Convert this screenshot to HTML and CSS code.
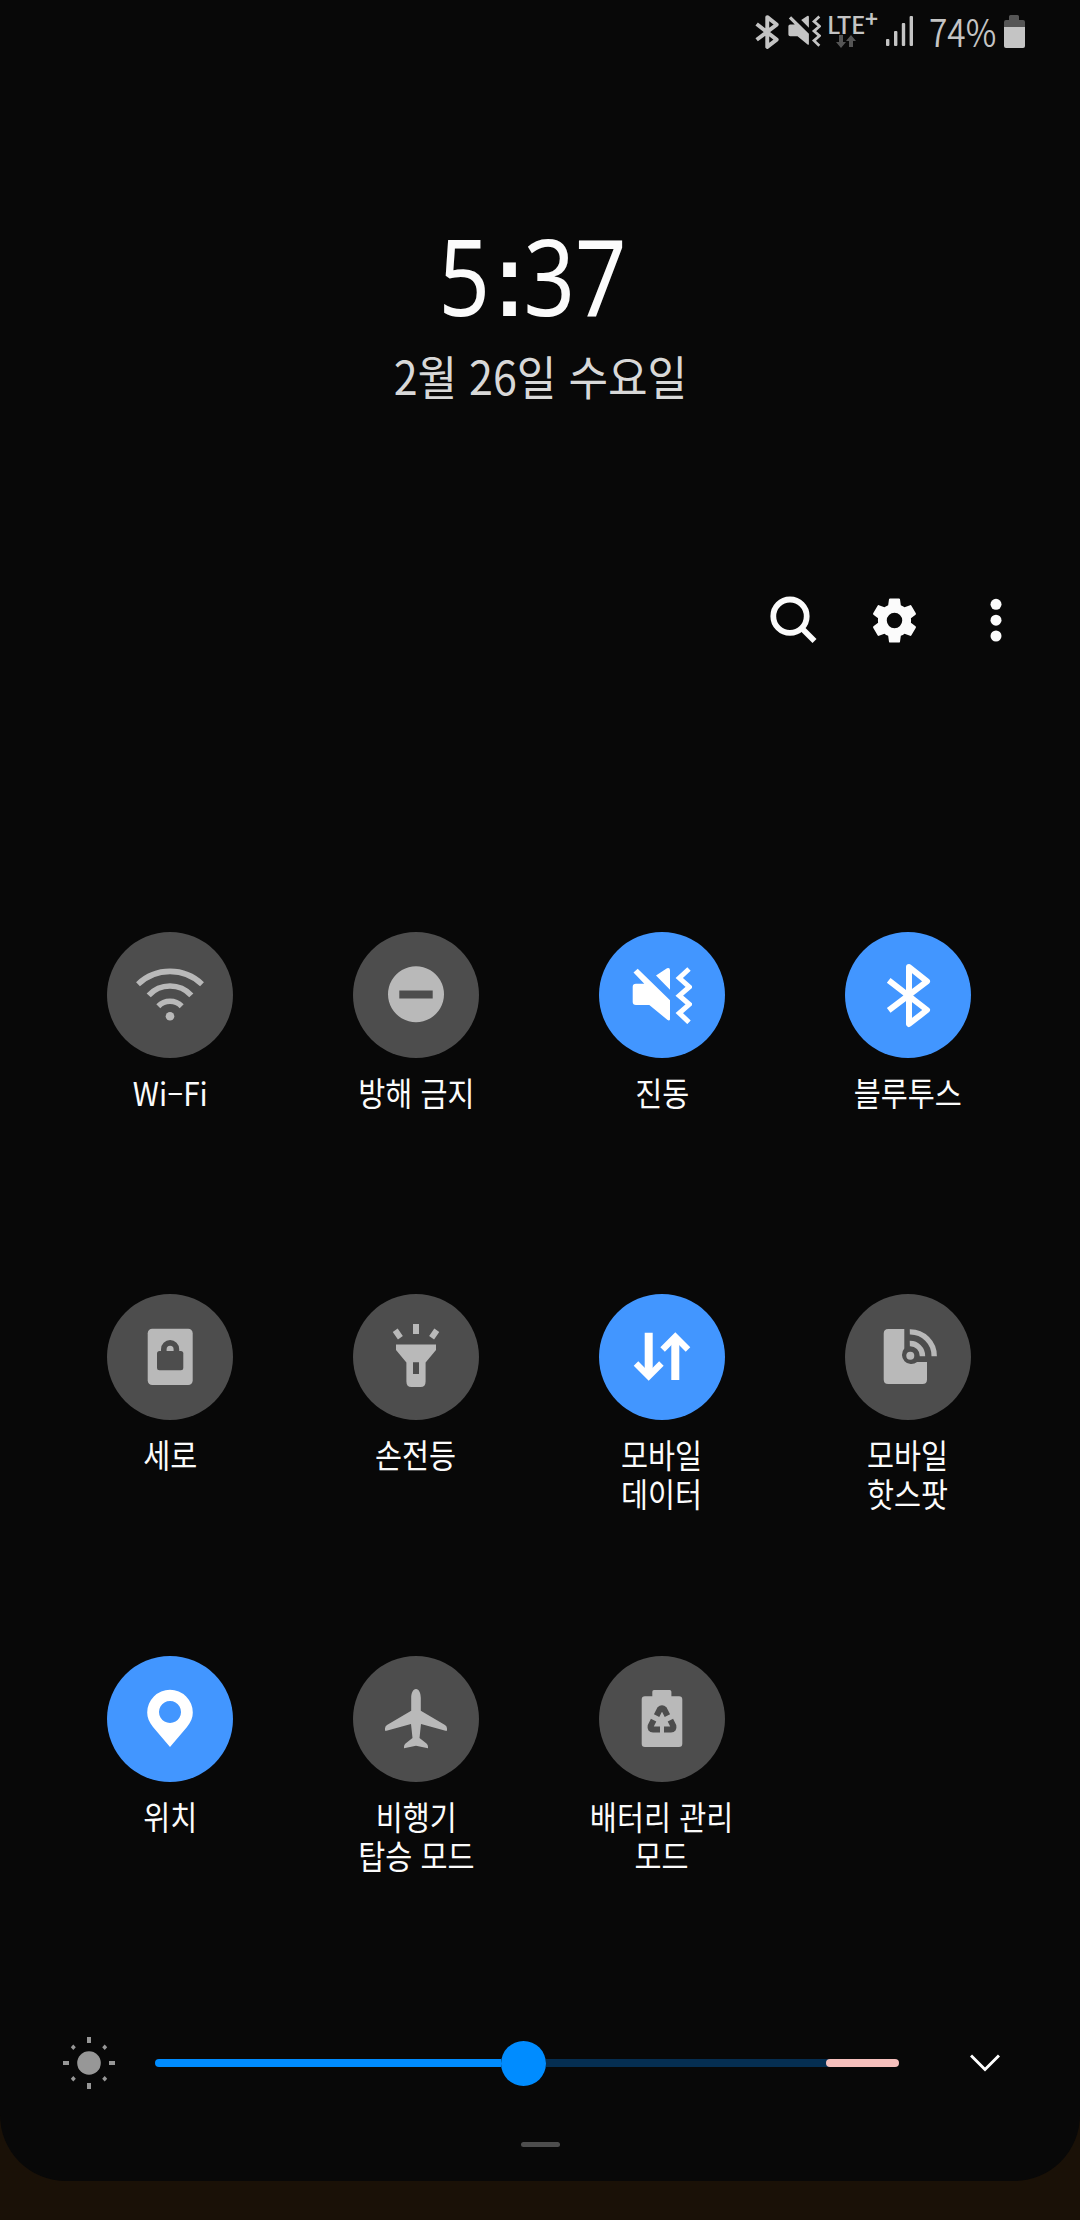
FILE: index.html
```html
<!DOCTYPE html>
<html lang="ko">
<head>
<meta charset="utf-8">
<title>빠른 설정</title>
<link rel="stylesheet" href="styles.css">
</head>
<body>
<svg class="defs" width="0" height="0">
  <symbol id="vibrate" viewBox="33 34 60 57">
    <path fill="currentColor" d="M38.7 35.7 71 67.3V86.4Q70.4 88 68.6 87L50.3 72H37Q33.7 72 33.7 69V53.7Q33.7 50.7 37 50.7H45.3L34.5 39.6ZM57 42.5 68 35.2Q71 34.3 71 37.2V56.7Z"/>
    <path fill="none" stroke="currentColor" stroke-width="5" d="M90 36 80.3 45 90.3 54 80.3 62.7 90.3 71.3 80.3 80 90 89.3"/>
  </symbol>
  <symbol id="bluetooth" viewBox="41 30 45 65">
    <path fill="none" stroke="currentColor" stroke-linejoin="round" d="M43.7 47.3 82 77 64 91V34L82 48.3 43.7 77.3"/>
  </symbol>
</svg>
<main class="panel">
  <header class="status">
    <svg class="st-bt" width="24" height="34"><use href="#bluetooth"/></svg>
    <svg class="st-vib" width="33" height="32"><use href="#vibrate"/></svg>
    <div class="network">
      <div class="lte">LTE<sup>+</sup></div>
      <svg width="20" height="13" viewBox="0 0 20 13" fill="#555"><path d="M3 0H7V7H10L5 13 0 7H3ZM13 12H17V6H20L15 0 10 6H13Z"/></svg>
    </div>
    <svg class="signal" width="28" height="30" fill="#c4c4c4"><rect y="23" width="3.4" height="7" rx="1"/><rect x="8" y="15" width="3.4" height="15" rx="1"/><rect x="15.8" y="7" width="3.4" height="23" rx="1"/><rect x="23.6" width="3.4" height="30" rx="1"/></svg>
    <span class="percent">74%</span>
    <svg class="battery" width="21" height="33"><path fill="#555" d="M6.5 0H13.5Q15 0 15 1.5V5H19Q21 5 21 7V12H0V7Q0 5 2 5H5V1.5Q5 0 6.5 0Z"/><path fill="#c4c4c4" d="M0 12H21V31Q21 33 19 33H2Q0 33 0 31Z"/></svg>
  </header>

  <section class="clock">
    <div class="time">5<span class="colon">:</span>37</div>
    <div class="date">2월 26일 수요일</div>
  </section>

  <nav class="tools">
    <svg width="54" height="54" fill="none" stroke="#fbfbfb"><circle cx="24" cy="23.2" r="16.7" stroke-width="5.8"/><path stroke-width="5.6" d="M35.5 35 48.5 48"/></svg>
    <svg width="53" height="53" viewBox="0 0 24 24" fill="#fbfbfb"><path d="M19.43 12.98c.04-.32.07-.64.07-.98s-.03-.66-.07-.98l2.11-1.65c.19-.15.24-.42.12-.64l-2-3.46c-.12-.22-.39-.3-.61-.22l-2.49 1c-.52-.4-1.08-.73-1.69-.98l-.38-2.65A.488.488 0 0 0 14 2h-4c-.25 0-.46.18-.49.42l-.38 2.65c-.61.25-1.17.59-1.69.98l-2.49-1c-.23-.09-.49 0-.61.22l-2 3.46c-.13.22-.07.49.12.64l2.11 1.65c-.04.32-.07.65-.07.98s.03.66.07.98l-2.11 1.65c-.19.15-.24.42-.12.64l2 3.46c.12.22.39.3.61.22l2.49-1c.52.4 1.08.73 1.69.98l.38 2.65c.03.24.24.42.49.42h4c.25 0 .46-.18.49-.42l.38-2.65c.61-.25 1.17-.59 1.69-.98l2.49 1c.23.09.49 0 .61-.22l2-3.46c.12-.22.07-.49-.12-.64zM12 15.5a3.5 3.5 0 1 1 0-7 3.5 3.5 0 0 1 0 7z"/></svg>
    <svg width="54" height="54" fill="#fbfbfb"><circle cx="27" cy="11.3" r="5.5"/><circle cx="27" cy="27.2" r="5.5"/><circle cx="27" cy="43" r="5.5"/></svg>
  </nav>

  <section class="tiles">
    <div class="tile">
      <div class="disc"><svg viewBox="0 0 126 126" fill="none" stroke="currentColor" stroke-width="5.6"><path d="M31 52.2A46.4 46.4 0 0 1 95 52.2M41.7 63.3A29 29 0 0 1 84.3 63.3M51.3 74.2A16.4 16.4 0 0 1 74.7 74.2"/><circle cx="63" cy="84.3" r="4.3" fill="currentColor" stroke="none"/></svg></div>
      <div class="label latin">Wi–Fi</div>
    </div>
    <div class="tile">
      <div class="disc"><svg viewBox="0 0 126 126" fill="currentColor"><path fill-rule="evenodd" d="M63 34.3a28 28 0 1 0 .01 0ZM46.3 58.6H79.7V66.6H46.3Z"/></svg></div>
      <div class="label">방해 금지</div>
    </div>
    <div class="tile on">
      <div class="disc"><svg class="i-vib"><use href="#vibrate"/></svg></div>
      <div class="label">진동</div>
    </div>
    <div class="tile on">
      <div class="disc"><svg class="i-bt"><use href="#bluetooth"/></svg></div>
      <div class="label">블루투스</div>
    </div>

    <div class="tile">
      <div class="disc"><svg viewBox="0 0 126 126"><rect x="40.7" y="34.7" width="45" height="56.3" rx="4.5" fill="currentColor"/><rect x="50" y="57" width="26.3" height="19.2" rx="2.5" fill="#4d4d4d"/><path d="M56.8 58V55.2a6.3 6.3 0 0 1 12.6 0V58" fill="none" stroke="#4d4d4d" stroke-width="5.6"/></svg></div>
      <div class="label">세로</div>
    </div>
    <div class="tile">
      <div class="disc"><svg viewBox="0 0 126 126"><path fill="none" stroke="currentColor" stroke-width="6" d="M63 30V40M42.2 36.3 47.4 43.7M83.8 36.3 78.6 43.7"/><path fill="currentColor" fill-rule="evenodd" d="M43 50.5H83V56L72.6 68.5V87.5Q72.6 93 67.5 93H58.5Q53.4 93 53.4 87.5V68.5L43 56ZM60 68.3V80H66V68.3Z"/></svg></div>
      <div class="label">손전등</div>
    </div>
    <div class="tile on">
      <div class="disc"><svg viewBox="0 0 126 126" fill="none" stroke="currentColor"><path stroke-width="8" d="M49.7 38.7V81M76.3 86V44"/><path stroke-width="6.4" d="M37 69.5 49.7 82.2 62.4 69.5M63.6 55.5 76.3 42.8 89 55.5"/></svg></div>
      <div class="label">모바일<br>데이터</div>
    </div>
    <div class="tile">
      <div class="disc"><svg viewBox="0 0 126 126" fill="currentColor"><path d="M43.2 35H59.3V54.6A9.3 9.3 0 0 0 72.1 68H82V85.5Q82 90 77.5 90H43.2Q38.7 90 38.7 85.5V39.5Q38.7 35 43.2 35Z"/><circle cx="65.3" cy="61.7" r="4"/><path fill="none" stroke="currentColor" stroke-width="5.4" d="M64.8 49.5A12.4 12.4 0 0 1 77.5 62.2M64.8 37.9A24 24 0 0 1 89.2 62.2"/></svg></div>
      <div class="label">모바일<br>핫스팟</div>
    </div>

    <div class="tile on">
      <div class="disc"><svg viewBox="0 0 126 126" fill="currentColor"><path fill-rule="evenodd" d="M63 91 46 71C42 66 40.2 61.5 40.2 56.5A22.8 22.8 0 0 1 85.8 56.5C85.8 61.5 84 66 80 71ZM63 45a11 11 0 1 0 .01 0Z"/></svg></div>
      <div class="label">위치</div>
    </div>
    <div class="tile">
      <div class="disc"><svg viewBox="0 0 126 126" fill="currentColor"><path d="M63 33C60 33 58.2 37 58.2 42V54.7L34 69Q32 70.4 32 72.5V74.8H33.5L58 68 59.5 82 52.5 87.5Q51 88.8 51 90.8V92.2L63 89.8 75 92.2V90.8Q75 88.8 73.5 87.5L66.5 82 68 68 92.5 74.8H94V72.5Q94 70.4 92 69L67.8 54.7V42C67.8 37 66 33 63 33Z"/></svg></div>
      <div class="label">비행기<br>탑승 모드</div>
    </div>
    <div class="tile">
      <div class="disc"><svg viewBox="0 0 126 126"><path fill="currentColor" d="M55 34H70.7Q72.4 34 72.4 35.7V40.3H80Q83.3 40.3 83.3 43.6V87.7Q83.3 91 80 91H46Q42.7 91 42.7 87.7V43.6Q42.7 40.3 46 40.3H53.3V35.7Q53.3 34 55 34Z"/><path fill="none" stroke="#4d4d4d" stroke-width="6" stroke-linejoin="round" d="M57.6 59.6 60.8 53.4Q63 51 65.2 53.4L68.4 59.6M54.6 64.2 51.6 70.2Q51 73.4 54 73.4H61M71.4 64.2 74.4 70.2Q75 73.4 72 73.4H65"/></svg></div>
      <div class="label">배터리 관리<br>모드</div>
    </div>
  </section>

  <footer class="brightness">
    <svg width="52" height="52" fill="#979797"><circle cx="26" cy="26" r="11.8"/><path d="M24 0H28V6H24ZM24 46H28V52H24ZM0 24H6V28H0ZM46 24H52V28H46ZM10.3 7.6 12.8 10.3 10.3 13 7.8 10.3ZM41.7 7.6 44.2 10.3 41.7 13 39.2 10.3ZM10.3 39 12.8 41.7 10.3 44.4 7.8 41.7ZM41.7 39 44.2 41.7 41.7 44.4 39.2 41.7Z"/></svg>
    <div class="track"><div class="fill"></div><div class="thumb"></div><div class="rest"></div><div class="warn"></div></div>
    <svg width="30" height="18" fill="none" stroke="#fff" stroke-width="3"><path d="M1 1.5 15 15.5 29 1.5"/></svg>
  </footer>
  <div class="handle"></div>
</main>
</body>
</html>
```
FILE: styles.css
```css
* { box-sizing: border-box; }
body {
  margin: 0;
  height: 2220px;
  overflow: hidden;
  background: #1a1107;
  font-family: "Noto Sans CJK KR", sans-serif;
  color: #fbfbfb;
}
svg { display: block; flex: none; }
.defs { position: absolute; }
.panel {
  width: 1080px;
  height: 2181px;
  display: flex;
  flex-direction: column;
  background: #080808;
  border-radius: 0 0 66px 66px;
}
.status {
  height: 64px;
  padding: 0 55px 0 755px;
  display: flex;
  align-items: flex-start;
  color: #c4c4c4;
}
.st-bt { margin-top: 15px; stroke-width: 7.5px; }
.st-vib { margin: 15px 0 0 9px; }
.network { width: 58px; margin: 11px 0 0 6px; }
.network svg { margin: 2px 0 0 9px; }
.lte {
  display: flex;
  height: 22px;
  font: 500 24px/25px "Noto Sans CJK KR", sans-serif;
  letter-spacing: -.4px;
}
.lte sup { font-size: 22px; line-height: 12px; font-weight: 700; }
.signal { margin: 16px 0 0 2px; }
.percent {
  width: 67px;
  margin-left: 15px;
  font-size: 38px;
  line-height: 61px;
  font-weight: 350;
  transform: scaleX(.88);
  transform-origin: left;
}
.battery { margin: 15px 0 0 8px; }
.clock {
  height: 506px;
  padding-top: 151px;
  display: flex;
  flex-direction: column;
  align-items: center;
}
.time {
  font: 106px/120px "Noto Sans", sans-serif;
  white-space: nowrap;
  transform: translateX(-7px) scaleX(.85);
}
.colon { margin: 0 -1px 0 5px; font: bold 106px/120px "Liberation Sans", sans-serif; }
.date {
  margin-top: 6px;
  font-size: 47px;
  line-height: 60px;
  color: #d8d8d8;
  white-space: nowrap;
  transform: scaleX(.915);
}
.tools {
  height: 100px;
  padding-right: 57px;
  display: flex;
  justify-content: flex-end;
  align-items: center;
  gap: 48px;
}
.tiles {
  height: 1086px;
  margin: 262px 49px 0 47px;
  display: grid;
  grid-template-columns: repeat(4, 246px);
  grid-template-rows: repeat(3, 362px);
}
.tile { display: flex; flex-direction: column; align-items: center; }
.disc {
  width: 126px;
  height: 126px;
  border-radius: 50%;
  display: flex;
  align-items: center;
  justify-content: center;
  background: #4d4d4d;
  color: #b9b9b9;
}
.on .disc { background: #4296ff; color: #fff; }
.disc svg { width: 126px; height: 126px; }
.disc .i-vib { width: 60px; height: 57px; }
.disc .i-bt { width: 45px; height: 65px; stroke-width: 6px; }
.label {
  margin-top: 15px;
  font-size: 33px;
  line-height: 39px;
  text-align: center;
  white-space: nowrap;
  transform: scaleX(.89);
}
.latin { font-size: 32px; transform: scaleX(.93); }
.brightness {
  height: 52px;
  margin-top: 19px;
  padding-left: 63px;
  display: flex;
  align-items: center;
}
.track {
  width: 744px;
  margin: 0 71px 0 40px;
  display: flex;
  align-items: center;
}
.fill { width: 346px; height: 8px; border-radius: 4px 0 0 4px; background: #008cff; }
.thumb { width: 45px; height: 45px; border-radius: 50%; background: #008cff; }
.rest { width: 284px; height: 8px; margin-right: -4px; background: #052e51; }
.warn { width: 73px; height: 8px; border-radius: 4px; background: #f6c0bd; }
.handle {
  width: 39px;
  height: 5px;
  margin: 53px auto 0;
  border-radius: 3px;
  background: #4d4d4d;
}
```
